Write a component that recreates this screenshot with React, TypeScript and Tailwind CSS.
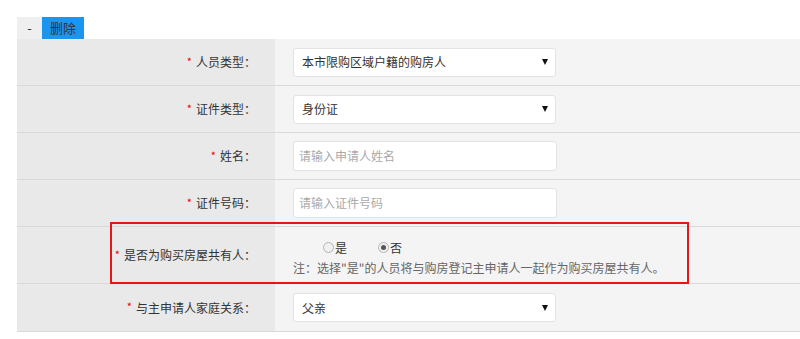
import React from 'react';

const font = { fontFamily: '"Noto Sans CJK SC", "Liberation Sans", sans-serif' };

function Label({ text }: { text: string }) {
    return (
        <div className="flex items-center justify-end pr-[19px] bg-[#e9e9e9] text-[12px] text-[#333]">
            <span className="text-[#e00] text-[11px] mr-[4px] relative top-[-1px]">*</span>
            <span>{text}</span>
        </div>
    );
}

function Select({ value }: { value: string }) {
    return (
        <div className="w-[263px] h-[29px] bg-white border border-[#e3e3e3] rounded-[3px] flex items-center justify-between pl-[8px] pr-[7px] text-[12px] text-[#333]">
            <span>{value}</span>
            <span className="w-0 h-0 border-l-[3.5px] border-r-[3.5px] border-t-[6px] border-l-transparent border-r-transparent border-t-[#111]" />
        </div>
    );
}

function Input({ placeholder }: { placeholder: string }) {
    return (
        <div className="w-[264px] h-[30px] bg-white border border-[#e3e3e3] rounded-[3px] flex items-center pl-[5px] text-[12px] text-[#aaa]">
            {placeholder}
        </div>
    );
}

function Row({ label, h = 'h-[47px]', children }: { label: string; h?: string; children: React.ReactNode }) {
    return (
        <div className={`grid grid-cols-[258px_1fr] border-b border-[#d9d9d9] ${h}`}>
            <Label text={label} />
            <div className="bg-[#f4f4f4] flex items-center pl-[18px]">{children}</div>
        </div>
    );
}

function Radio({ checked, text }: { checked?: boolean; text: string }) {
    return (
        <span className="flex items-center text-[12px] text-[#333]">
            <span className="w-[11px] h-[11px] rounded-full border border-[#b5b5b5] bg-[#f0f0f0] flex items-center justify-center">
                {checked && <span className="w-[5px] h-[5px] rounded-full bg-[#555]" />}
            </span>
            <span className="ml-[1px]">{text}</span>
        </span>
    );
}

export default function App() {
    return (
        <div className="w-[800px] h-[339px] bg-white pl-[17px] pt-[17px] relative overflow-hidden" style={font}>
            {/* ── tab strip ─────────────────────────────── */}
            <div className="flex h-[22px] text-[13px]">
                <div className="w-[25px] bg-[#efefef] flex items-center justify-center text-[#333]">-</div>
                <div className="w-[42px] bg-[#1b96f0] flex items-center justify-center text-[#333]">删除</div>
            </div>

            {/* ── form table ────────────────────────────── */}
            <div className="flex flex-col">
                <Row label="人员类型：">
                    <Select value="本市限购区域户籍的购房人" />
                </Row>
                <Row label="证件类型：">
                    <Select value="身份证" />
                </Row>
                <Row label="姓名：">
                    <Input placeholder="请输入申请人姓名" />
                </Row>
                <Row label="证件号码：">
                    <Input placeholder="请输入证件号码" />
                </Row>
                <Row label="是否为购买房屋共有人：" h="h-[57px]">
                    <div className="flex flex-col pt-[4px]">
                        <div className="flex gap-[31px] pl-[30px] h-[20px] items-center">
                            <Radio text="是" />
                            <Radio checked text="否" />
                        </div>
                        <div className="text-[12px] text-[#666] mt-[1px]">
                            注：选择"是"的人员将与购房登记主申请人一起作为购买房屋共有人。
                        </div>
                    </div>
                </Row>
                <Row label="与主申请人家庭关系：" h="h-[48px]">
                    <Select value="父亲" />
                </Row>
            </div>

            {/* annotation box */}
            <div className="absolute left-[110px] top-[222px] w-[579px] h-[62px] border-2 border-[#e8141b] pointer-events-none" />
        </div>
    );
}
